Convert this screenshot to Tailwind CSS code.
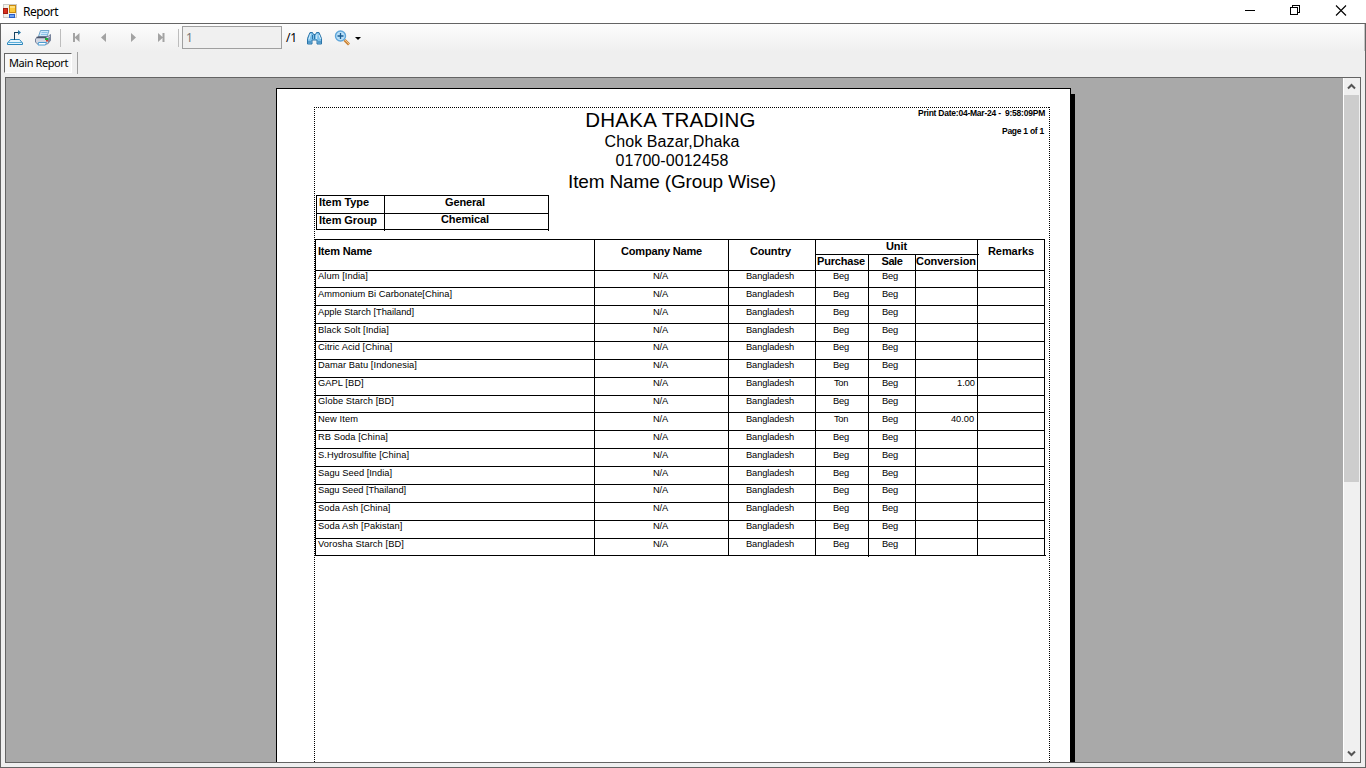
<!DOCTYPE html>
<html lang="en">
<head>
<meta charset="utf-8">
<title>Report</title>
<script src="https://cdn.jsdelivr.net/npm/@tailwindcss/browser@4"></script>
</head>
<body class="w-[1366px] h-[768px] overflow-hidden bg-white text-black font-['Liberation_Sans',Arial,sans-serif]">
<div class="flex h-[768px] w-[1366px] flex-col">
  <!-- title bar -->
  <header class="flex h-[23px] shrink-0 items-center pl-[3px] font-['Noto_Sans',sans-serif] text-xs" data-f="12px 'Noto Sans'">
    <svg class="-mt-px h-[14px] w-[14px] shrink-0" viewBox="0 0 14 14" shape-rendering="crispEdges">
      <rect width="14" height="14" fill="#c9c9c6"/><rect x="1" y="1" width="12" height="12" fill="#f3f1ea"/>
      <rect x="0" y="4" width="5" height="6" fill="#a31c12"/><rect x="1" y="5" width="3" height="4" fill="#d8301c"/>
      <rect x="6" y="1" width="7" height="8" fill="#c98a10"/><rect x="7" y="2" width="5" height="6" fill="#fbc93a"/><rect x="7" y="2" width="5" height="2" fill="#ffe07a"/>
      <rect x="6" y="10" width="6" height="4" fill="#2c5fc8"/><rect x="7" y="11" width="4" height="2" fill="#6ea3f2"/>
    </svg>
    <span class="ml-[6px] mt-px whitespace-pre leading-4" data-w="35">Report</span>
    <svg class="ml-auto mr-[18px] h-[22px] w-[104px] -mt-px" viewBox="1244 0 104 22" fill="none" stroke="#000" shape-rendering="crispEdges">
      <path d="M1245 10.5h10"/><path d="M1290.5 7.5h7v7h-7zM1292.500 7V5.500h7v7H1298"/>
      <path d="M1336 5.500l10 10M1346 5.500l-10 10" stroke-width="1.1" shape-rendering="auto"/>
    </svg>
  </header>

  <div class="flex grow flex-col border border-[#646464] bg-[#efefef]">
    <!-- toolbar -->
    <div class="flex h-[27px] shrink-0 items-center bg-linear-to-b from-[#fdfdfd] to-[#efefef] border-r border-[#c4c4c4] font-['Noto_Sans',sans-serif] text-xs" data-f="12px 'Noto Sans'">
      <svg class="ml-[6px] h-[16px] w-[17px]" viewBox="7 30 17 16" fill="none">
        <path d="M10.500 39.500h9l3 3.500v1.500h-15V43z" fill="#e6f4fc" stroke="#2a86bb"/><path d="M8 42.500h14" stroke="#5aaeda"/>
        <path d="M14.500 40v-7.500h4" stroke="#17425f" shape-rendering="crispEdges"/><path d="M18 30l3 2.500-3 2.500z" fill="#2a76a4"/>
      </svg>
      <svg class="ml-[11px] h-[16px] w-[17px]" viewBox="35 30 17 16" fill="none">
        <path d="M40.500 30.500h8.500l-2 6h-8.500z" fill="#cfe9fa" stroke="#6fa6cc"/><path d="M41.500 32.500h6M41 34.500h6" stroke="#8cc3e8"/>
        <path d="M38 36.500h10l2.500-2v6l-3 3.500h-10l-2-2v-3z" fill="#d3d8e3" stroke="#76829b"/>
        <path d="M36.500 37.500h10" stroke="#4a556c" stroke-width="1.500"/><path d="M48 38l2.500-2v4.500l-2.500 3z" fill="#7b869c"/>
        <path d="M38.500 42.500h8l-1 2.500h-7.500z" fill="#fff" stroke="#4a9bd0"/>
        <rect x="45" y="38" width="3" height="2" fill="#1fae3c"/><rect x="46" y="40" width="2" height="1.500" fill="#d83a2a"/>
      </svg>
      <i class="ml-[8px] h-[18px] w-px bg-[#bdbdbd]"></i>
      <svg class="ml-[11px] h-[12px] w-[96px]" viewBox="72 32 96 12" fill="#a3a3a3">
        <path d="M73 33h2v9h-2zM79.500 33v9l-5-4.500zM106 33v9l-5-4.500zM131 33v9l5-4.500zM158 33v9l5-4.500zM162.500 33h2v9h-2z"/>
      </svg>
      <i class="ml-[10px] h-[18px] w-px bg-[#bdbdbd]"></i>
      <div class="ml-[3px] -mt-px flex h-[23px] w-[100px] border border-[#a0a0a0] bg-[#f0f0f0] pl-[3px] leading-[21px] text-[#777]">1</div>
      <span class="ml-[4px] whitespace-pre" data-w="11">/1</span>
      <svg class="ml-[9px] h-[14px] w-[16px]" viewBox="306 31 16 14">
        <path d="M310 32.500h2.500l1 2h2l1-2h2.500l2.500 6v5.500h-4.500v-4h-5v4h-4.500v-5.500z" fill="#7cc0ea" stroke="#2b74a8"/>
        <path d="M310.500 34l-1.500 5.500M317 34l-.5 5M319 35l1.500 4" stroke="#d8effb"/><path d="M308 42h3M318 42h3M312.500 35v4M314.500 35v4" stroke="#2b74a8"/>
      </svg>
      <svg class="ml-[12px] h-[16px] w-[17px]" viewBox="334 29 17 16" fill="none">
        <path d="M344.500 39l4.500 4.500" stroke="#c98235" stroke-width="2.800"/><path d="M345 39l4 4" stroke="#f0c48a"/>
        <circle cx="340.500" cy="35" r="5" fill="#b9e0f9" stroke="#5fa6da" stroke-width="1.400"/>
        <path d="M337.500 35h6M340.500 32v6" stroke="#1a5c92" stroke-width="1.300"/>
      </svg>
      <svg class="ml-[4px] mt-[2px] h-[3px] w-[6px]" viewBox="0 0 6 3"><path d="M0 0h6L3 3z"/></svg>
    </div>

    <!-- tab strip -->
    <div class="flex h-[26px] shrink-0 items-start pl-[3px] pt-[2px]">
      <div class="h-[20px] w-[68px] border border-r-white border-b-white border-l-[#666] border-t-[#666] bg-[#f8f8f8] pl-[4px] font-['Noto_Sans',sans-serif] text-[11px] leading-[18px]" data-f="11px 'Noto Sans'"><span class="whitespace-pre" data-w="59">Main Report</span></div>
      <i class="ml-[5px] mt-[-1px] h-[22px] w-px bg-[#a0a0a0]"></i>
    </div>

    <!-- report viewer -->
    <div class="ml-1 flex h-[686px] w-[1356px] border border-[#646464] bg-[#a9a9a9]">
      <div class="flex h-[684px] w-[1337px] overflow-hidden pl-[270px] pt-[10px]">
        <div class="h-[700px] w-[795px] shrink-0 border border-black bg-white pl-[37px] pt-[18px]">
          <div class="relative h-[700px] w-[736px]">
            <i class="absolute left-0 top-0 h-px w-full bg-[repeating-linear-gradient(90deg,#000_0_1px,#fff_1px_2px)]"></i>
            <i class="absolute left-0 top-0 h-full w-px bg-[repeating-linear-gradient(#000_0_1px,#fff_1px_2px)]"></i>
            <i class="absolute right-0 top-0 h-full w-px bg-[repeating-linear-gradient(#000_0_1px,#fff_1px_2px)]"></i>

            <div class="grid h-[88px] grid-cols-[254px_208px_1fr] pt-px">
              <div></div>
              <div class="flex flex-col items-center whitespace-nowrap">
                <h1 class="-ml-[3px] text-[20.5px] leading-[24px]" data-f="20.5px 'Liberation Sans'" data-w="172">DHAKA TRADING</h1>
                <p class="text-base leading-[19px]" data-f="16px 'Liberation Sans'" data-w="135">Chok Bazar,Dhaka</p>
                <p class="text-base leading-[19px]" data-f="16px 'Liberation Sans'" data-w="113">01700-0012458</p>
                <h2 class="text-[19px] leading-[23px]" data-f="19px 'Liberation Sans'" data-w="208">Item Name (Group Wise)</h2>
              </div>
              <div class="flex flex-col items-end pr-[5px] text-[8.5px] font-bold leading-[10px]" data-f="bold 8.5px 'Liberation Sans'">
                <p class="whitespace-pre" data-w="127">Print Date:04-Mar-24 -  9:58:09PM</p>
                <p class="mr-px mt-[8px] whitespace-nowrap" data-w="42">Page 1 of 1</p>
              </div>
            </div>

            <div class="relative ml-[2px] grid w-[233px] grid-cols-[68px_164px] grid-rows-[18px_16px] border-l border-t border-black text-[11px] font-bold leading-[13px] whitespace-nowrap" data-f="bold 11px 'Liberation Sans'">
              <div class="border-b border-r border-black pl-[2px]"><span data-w="50">Item Type</span></div>
              <div class="border-b border-r border-black pr-[3px] text-center"><span data-w="40">General</span></div>
              <div class="border-b border-r border-black pl-[2px]"><span data-w="58">Item Group</span></div>
              <div class="border-b border-r border-black pr-[3px] text-center leading-[11px]"><span data-w="48">Chemical</span></div>
              <i class="absolute -bottom-px left-[67px] h-px w-px bg-black"></i>
              <i class="absolute -bottom-px right-0 h-px w-px bg-black"></i>
            </div>

            <div class="relative ml-px mt-[9px] w-[730px] border-l border-t border-black">
              <div class="grid h-[31px] grid-cols-[279px_134px_87px_162px_67px] whitespace-nowrap text-center text-[11px] font-bold" data-f="bold 11px 'Liberation Sans'">
                <div class="border-b border-r border-black pl-[2px] text-left leading-[23px]"><span data-w="54">Item Name</span></div>
                <div class="border-b border-r border-black leading-[23px]"><span data-w="81">Company Name</span></div>
                <div class="border-b border-r border-black pr-[3px] leading-[23px]"><span data-w="41">Country</span></div>
                <div class="grid grid-cols-[53px_47px_62px] grid-rows-[15px_16px]">
                  <div class="col-span-3 border-b border-r border-black leading-[13px]"><span data-w="21">Unit</span></div>
                  <div class="border-b border-r border-black pr-[2px] leading-[13px]"><span data-w="48">Purchase</span></div>
                  <div class="border-b border-r border-black leading-[13px]"><span data-w="21">Sale</span></div>
                  <div class="border-b border-r border-black pr-px text-left leading-[13px]"><span data-w="60">Conversion</span></div>
                </div>
                <div class="border-b border-r border-black leading-[23px]"><span data-w="46">Remarks</span></div>
              </div>
              <div id="rows" class="text-center text-[9.3px]" data-f="9.3px 'Liberation Sans'"></div>
              <!-- line ends that run past their corners -->
              <i class="absolute -right-px bottom-0 h-px w-px bg-black"></i>
              <i class="absolute -bottom-px left-[552px] h-px w-px bg-black"></i>
              <i class="absolute left-[662px] top-[14px] h-px w-px bg-black"></i>
            </div>
          </div>
        </div>
        <i class="mt-[6px] h-[700px] w-1 shrink-0 bg-black"></i>
      </div>
      <!-- scroll bar -->
      <div class="flex w-[17px] flex-col items-center border-l border-white bg-[#f0f0f0]">
        <svg class="h-[17px] w-[16px] shrink-0" viewBox="0 0 16 17" fill="none" stroke="#555" stroke-width="2"><path d="M4 10.500l3.500-3.500 3.500 3.500"/></svg>
        <div class="h-[387px] w-[15px] shrink-0 self-start bg-[#cdcdcd]"></div>
        <svg class="mt-auto h-[17px] w-[16px] shrink-0" viewBox="0 0 16 17" fill="none" stroke="#555" stroke-width="2"><path d="M4 6.500l3.500 3.500 3.500-3.500"/></svg>
      </div>
    </div>
  </div>
</div>
<script>
// item, text width, purchase unit, conversion, row height, text line height
const items = [
  ["Alum [India]", 50, "Beg", "", 17, 10], ["Ammonium Bi Carbonate[China]", 134, "Beg", "", 18, 12],
  ["Apple Starch [Thailand]", 96, "Beg", "", 18, 12], ["Black Solt [India]", 71, "Beg", "", 18, 12],
  ["Citric Acid [China]", 75, "Beg", "", 18, 10], ["Damar Batu [Indonesia]", 99, "Beg", "", 18, 10],
  ["GAPL [BD]", 46, "Ton", "1.00", 18, 10], ["Globe Starch [BD]", 76, "Beg", "", 17, 10],
  ["New Item", 40, "Ton", "40.00", 18, 12], ["RB Soda [China]", 70, "Beg", "", 18, 12],
  ["S.Hydrosulfite [China]", 91, "Beg", "", 18, 12], ["Sagu Seed [India]", 74, "Beg", "", 18, 12],
  ["Sagu Seed [Thailand]", 88, "Beg", "", 18, 10], ["Soda Ash [China]", 73, "Beg", "", 18, 10],
  ["Soda Ash [Pakistan]", 85, "Beg", "", 18, 10], ["Vorosha Starch [BD]", 86, "Beg", "", 17, 10]
];
document.getElementById("rows").innerHTML = items.map(([name, w, unit, conv, h, lh]) => `
  <div class="grid grid-cols-[279px_134px_87px_53px_47px_62px_67px] whitespace-nowrap" style="height:${h}px;line-height:${lh}px">
    <div class="border-b border-r border-black pl-[2px] text-left"><span data-w="${w}">${name}</span></div>
    <div class="border-b border-r border-black pr-[2px]"><span data-w="15">N/A</span></div>
    <div class="border-b border-r border-black pr-[4px]"><span data-w="48">Bangladesh</span></div>
    <div class="border-b border-r border-black pr-[2px]"><span data-w="${unit === "Ton" ? 14 : 16}">${unit}</span></div>
    <div class="border-b border-r border-black pr-[4px]"><span data-w="16">Beg</span></div>
    <div class="border-b border-r border-black ${conv.length > 4 ? "pr-[3px]" : "pr-[2px]"} text-right"><span data-w="${conv.length > 4 ? 23 : 18}">${conv}</span></div>
    <div class="border-b border-r border-black"></div>
  </div>`).join("");
// space the letters so that each label takes its stated width
const pen = document.createElement("canvas").getContext("2d");
document.querySelectorAll("[data-w]").forEach(el => {
  const text = el.textContent;
  if (!text) return;
  pen.font = el.closest("[data-f]").dataset.f;
  el.style.letterSpacing = ((el.dataset.w - pen.measureText(text).width) / text.length).toFixed(3) + "px";
});
</script>
</body>
</html>
